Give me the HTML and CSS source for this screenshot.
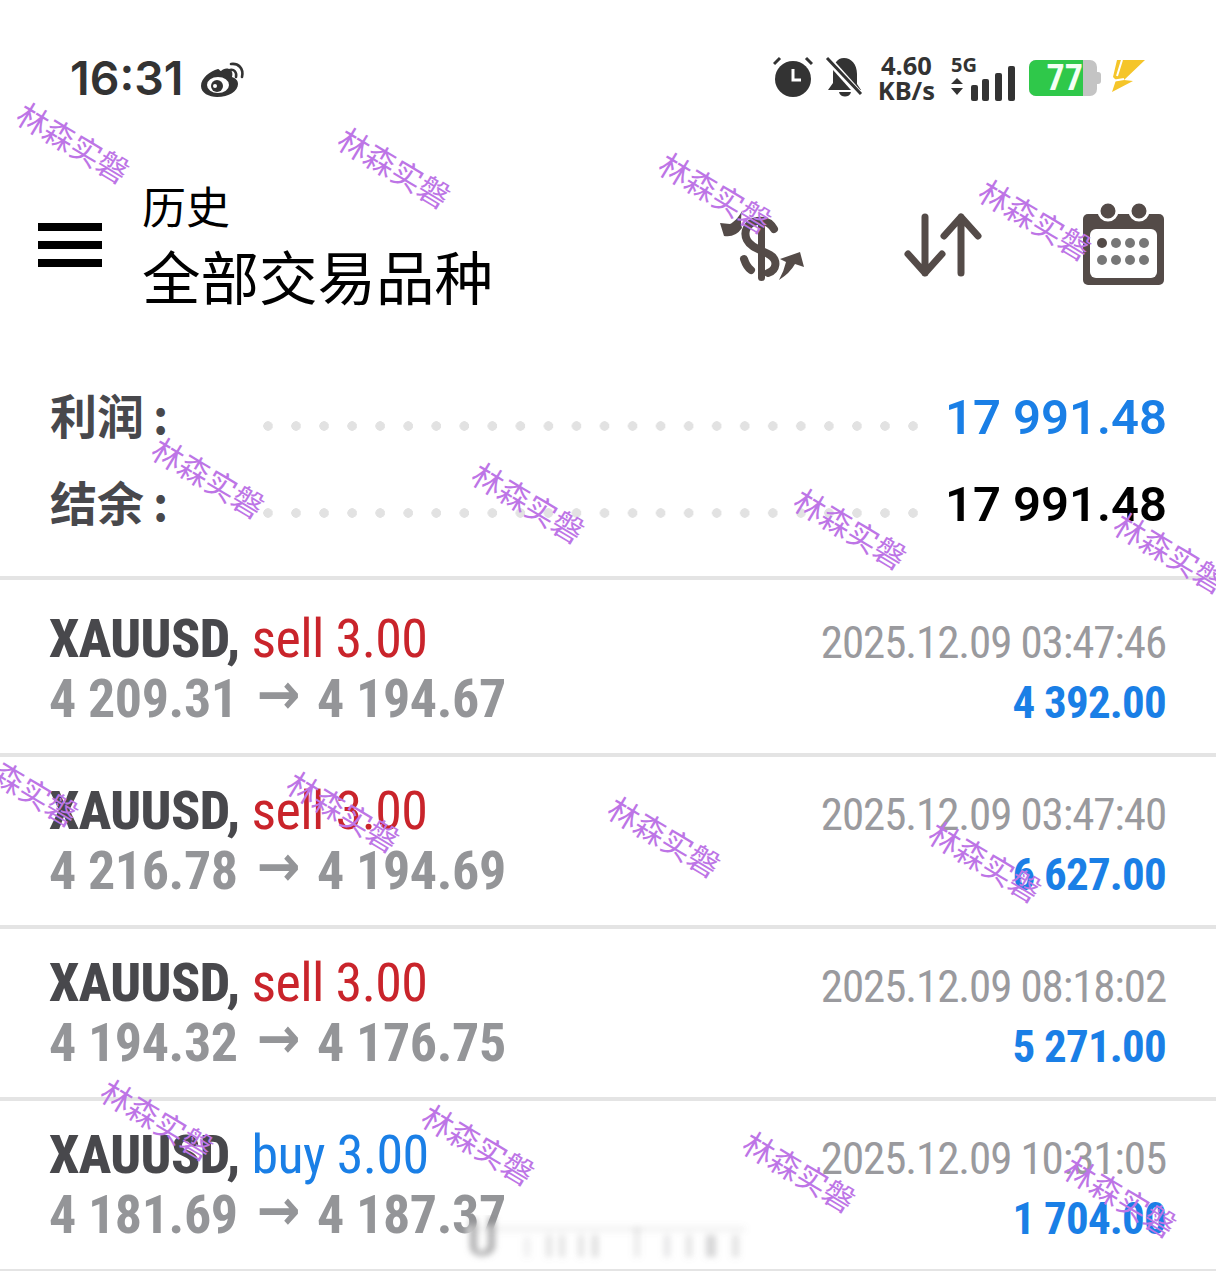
FILE: index.html
```html
<!DOCTYPE html>
<html lang="zh">
<head>
    <meta charset="UTF-8">
    <title>历史</title>
    <link rel="stylesheet" href="styles.css">
</head>
<body>
    <div class="screen">
        <div class="status-bar">
            <div class="status-left">
                <span class="clock">16:31</span>
                <svg class="weibo" width="44" height="36" viewBox="0 0 44 36">
                    <path d="M17 8C9 10 0 17 0 25c0 7 8 11 16 11 12 0 21-6 21-13 0-4-3-6-6-7 1-4 0-7-3-8-3-1-6 0-8 2-1 0-2-2-3-2z" fill="#333"/>
                    <ellipse cx="17" cy="24" rx="11" ry="8" fill="#fff"/>
                    <circle cx="16" cy="25" r="6" fill="#333"/>
                    <circle cx="14" cy="25" r="2" fill="#fff"/>
                    <path d="M29 9c4-1 7 2 6 7M30 3c7-1 13 4 11 13" fill="none" stroke="#333" stroke-width="2.6" stroke-linecap="round"/>
                </svg>
            </div>
            <div class="status-right">
                <svg class="st-alarm" width="40" height="42" viewBox="0 0 40 42">
                    <circle cx="20" cy="23" r="18" fill="#333"/>
                    <path d="M20 13v11h8" fill="none" stroke="#fff" stroke-width="3"/>
                    <path d="M1 8l6-6M39 8l-6-6" fill="none" stroke="#333" stroke-width="3"/>
                </svg>
                <svg class="st-bell" width="38" height="42" viewBox="0 0 38 42">
                    <path d="M8 18C8 8 12 2 19 2s13 6 13 16v10l4 6H3l5-7z" fill="#333"/>
                    <path d="M14 36h12c-1 6-11 6-12 0z" fill="#333"/>
                    <path d="M2 2l34 38" stroke="#fff" stroke-width="7"/>
                    <path d="M2 2l34 36" stroke="#333" stroke-width="3"/>
                </svg>
                <div class="st-speed"><span>4.60</span><span>KB/s</span></div>
                <div class="st-net">
                    <span class="st-5g">5G</span>
                    <svg width="64" height="36" viewBox="0 0 64 36">
                        <path d="M0 19l6-6 6 6zM0 23l6 7 6-7z" fill="#333"/>
                        <rect x="20" y="20" width="7" height="16" rx="2" fill="#333"/>
                        <rect x="31" y="14" width="7" height="22" rx="2" fill="#333"/>
                        <rect x="44" y="8" width="7" height="28" rx="2" fill="#333"/>
                        <rect x="57" y="1" width="7" height="35" rx="2" fill="#333"/>
                    </svg>
                </div>
                <div class="battery">
                    <div class="battery-body"><span class="battery-fill">77</span></div>
                    <div class="battery-cap"></div>
                </div>
                <svg class="st-bolt" width="36" height="34" viewBox="0 0 36 34">
                    <path d="M7 0h28L14 20l9 1L2 32l4-12-3-3z" fill="#f5c52a"/>
                    <path d="M12 0L7 16M2 21l12-2" stroke="#fff" stroke-width="2" fill="none"/>
                </svg>
            </div>
        </div>

        <div class="toolbar">
            <div class="menu-icon"><i></i><i></i><i></i></div>
            <div class="titles">
                <div class="title-small">历史</div>
                <div class="title-big">全部交易品种</div>
            </div>
            <div class="tool-icons">
                <svg class="ic-dollar" width="100" height="90" viewBox="0 0 100 90" fill="#544b48">
                    <rect x="48" y="22" width="7" height="59" rx="3.5"/>
                    <path d="M64 29C60 22 54 20 47 21 37 23 33 32 37 40 41 48 52 50 60 55 68 60 67 70 58 73M34 59C36 65 38 68 41 70" fill="none" stroke="#544b48" stroke-width="8" stroke-linecap="round"/>
                    <path d="M32 11C28 18 24 22 20 24L10 23 14 36Q25 38 32 28 30 22 32 11z"/>
                    <path d="M69 80Q74 71 76 62L70 59 90 52 94 67 85 64Q80 73 69 80z"/>
                </svg>
                <svg class="ic-sort" width="78" height="64" viewBox="0 0 78 64" fill="none" stroke="#544b48" stroke-width="7" stroke-linecap="round" stroke-linejoin="round">
                    <path d="M21 4v56M4 41l17 19 17-19"/>
                    <path d="M57 60V4M40 23L57 4l17 19"/>
                </svg>
                <svg class="ic-cal" width="82" height="82" viewBox="0 0 82 82">
                    <path d="M5 11h71a5 5 0 0 1 5 5v61a5 5 0 0 1-5 5H5a5 5 0 0 1-5-5V16a5 5 0 0 1 5-5z" fill="#544b48"/>
                    <rect x="7" y="26" width="67" height="49" rx="6" fill="#fff"/>
                    <circle cx="25" cy="8" r="9" fill="#544b48" stroke="#fff" stroke-width="3"/>
                    <circle cx="56" cy="8" r="9" fill="#544b48" stroke="#fff" stroke-width="3"/>
                    <g fill="#777">
                        <circle cx="19" cy="40" r="5" fill="#544b48"/><circle cx="33" cy="40" r="5"/><circle cx="47" cy="40" r="5"/><circle cx="61" cy="40" r="5"/>
                        <circle cx="19" cy="57" r="5"/><circle cx="33" cy="57" r="5"/><circle cx="47" cy="57" r="5"/><circle cx="61" cy="57" r="5"/>
                    </g>
                </svg>
            </div>
        </div>

        <div class="summary">
            <div class="summary-row">
                <span class="summary-label">利润<span class="colon">:</span></span>
                <span class="dots"></span>
                <span class="summary-value blue">17 991.48</span>
            </div>
            <div class="summary-row">
                <span class="summary-label">结余<span class="colon">:</span></span>
                <span class="dots"></span>
                <span class="summary-value">17 991.48</span>
            </div>
        </div>

        <div class="deals">
            <div class="deal first">
                <div class="deal-left">
                    <div class="deal-title"><b>XAUUSD,</b> <span class="red">sell 3.00</span></div>
                    <div class="deal-price">4 209.31 <span class="arrow">→</span> 4 194.67</div>
                </div>
                <div class="deal-right">
                    <div class="deal-time">2025.12.09 03:47:46</div>
                    <div class="deal-amount">4 392.00</div>
                </div>
            </div>
            <div class="deal">
                <div class="deal-left">
                    <div class="deal-title"><b>XAUUSD,</b> <span class="red">sell 3.00</span></div>
                    <div class="deal-price">4 216.78 <span class="arrow">→</span> 4 194.69</div>
                </div>
                <div class="deal-right">
                    <div class="deal-time">2025.12.09 03:47:40</div>
                    <div class="deal-amount">6 627.00</div>
                </div>
            </div>
            <div class="deal">
                <div class="deal-left">
                    <div class="deal-title"><b>XAUUSD,</b> <span class="red">sell 3.00</span></div>
                    <div class="deal-price">4 194.32 <span class="arrow">→</span> 4 176.75</div>
                </div>
                <div class="deal-right">
                    <div class="deal-time">2025.12.09 08:18:02</div>
                    <div class="deal-amount">5 271.00</div>
                </div>
            </div>
            <div class="deal">
                <div class="deal-left">
                    <div class="deal-title"><b>XAUUSD,</b> <span class="blue">buy 3.00</span></div>
                    <div class="deal-price">4 181.69 <span class="arrow">→</span> 4 187.37</div>
                </div>
                <div class="deal-right">
                    <div class="deal-time">2025.12.09 10:31:05</div>
                    <div class="deal-amount">1 704.00</div>
                </div>
            </div>
        </div>

        <!-- blurred bit over the last row -->
        <svg class="smudge" width="300" height="50" viewBox="0 0 300 50">
            <defs>
                <filter id="soft" x="-20%" y="-20%" width="140%" height="140%"><feGaussianBlur stdDeviation="3"/></filter>
            </defs>
            <rect x="8" y="10" width="284" height="34" fill="#fff" filter="url(#soft)"/>
            <g filter="url(#soft)" fill="#8a8a8c">
                <rect x="10" y="12" width="275" height="4" opacity=".15"/>
                <path d="M10 4h7v28c0 6 9 6 11-2V2h7v30c-2 12-24 12-25 0z" opacity=".7"/>
                <rect x="64" y="22" width="6" height="20" opacity=".14"/>
                <rect x="86" y="20" width="6" height="22" opacity=".25"/>
                <rect x="99" y="20" width="6" height="22" opacity=".25"/>
                <rect x="118" y="20" width="6" height="22" opacity=".25"/>
                <rect x="132" y="20" width="6" height="22" opacity=".3"/>
                <rect x="174" y="12" width="6" height="30" opacity=".18"/>
                <rect x="204" y="20" width="6" height="22" opacity=".22"/>
                <rect x="226" y="20" width="6" height="22" opacity=".25"/>
                <rect x="246" y="20" width="10" height="22" opacity=".35"/>
                <rect x="272" y="20" width="7" height="22" opacity=".25"/>
            </g>
        </svg>

        <!-- watermark stamps -->
        <span class="mark m1">林森实磐</span>
        <span class="mark m2">林森实磐</span>
        <span class="mark m3">林森实磐</span>
        <span class="mark m4">林森实磐</span>
        <span class="mark m5">林森实磐</span>
        <span class="mark m6">林森实磐</span>
        <span class="mark m7">林森实磐</span>
        <span class="mark m8">林森实磐</span>
        <span class="mark m9">林森实磐</span>
        <span class="mark m10">林森实磐</span>
        <span class="mark m11">林森实磐</span>
        <span class="mark m12">林森实磐</span>
        <span class="mark m13">林森实磐</span>
        <span class="mark m14">林森实磐</span>
        <span class="mark m15">林森实磐</span>
        <span class="mark m16">林森实磐</span>
    </div>
</body>
</html>
```

FILE: styles.css
```css
body {
    margin: 0;
    background: #fff;
    font-family: Roboto, "Noto Sans CJK SC", sans-serif;
}
.screen {
    position: relative;
    width: 1216px;
    height: 1271px;
    overflow: hidden;
}

/* status bar */
.status-bar {
    display: flex;
    justify-content: space-between;
    align-items: center;
    height: 46px;
    padding: 55px 70px 0 70px;
}
.status-left {
    display: flex;
    align-items: center;
    gap: 18px;
}
.clock {
    font-family: Inter, sans-serif;
    font-size: 46.5px;
    font-weight: 600;
    color: #333;
}
.weibo { margin-top: 2px; }
.status-right {
    display: flex;
    align-items: center;
}
.st-alarm { margin-top: -2px; }
.st-bell { margin: -2px 0.5px 0 12px; }
.st-speed {
    display: flex;
    flex-direction: column;
    margin-left: 14px;
    font-family: "Noto Sans", sans-serif;
    font-size: 25.5px;
    font-weight: 700;
    line-height: 25px;
    color: #333;
    text-align: center;
}
.st-net {
    position: relative;
    margin-left: 16px;
    width: 64px;
    height: 46px;
    display: flex;
    align-items: flex-end;
}
.st-5g {
    position: absolute;
    top: -4px;
    left: 0;
    font-family: "Noto Sans", sans-serif;
    font-size: 20px;
    font-weight: 700;
    color: #333;
}
.battery {
    display: flex;
    align-items: center;
    margin-left: 14px;
}
.battery-body {
    width: 68px;
    height: 36px;
    background: #c4c4c4;
    border-radius: 7px;
    overflow: hidden;
}
.battery-fill {
    display: block;
    width: 54px;
    height: 36px;
    background: #2fc84a;
    color: #f4fff4;
    font-size: 36px;
    font-stretch: 75%;
    font-weight: 700;
    line-height: 37px;
    text-align: right;
}
.battery-cap {
    width: 4px;
    height: 12px;
    background: #c4c4c4;
    border-radius: 0 3px 3px 0;
}
.st-bolt { margin-left: 9px; margin-top: -2px; }

/* toolbar */
.toolbar {
    display: flex;
    align-items: flex-start;
    padding: 76px 51px 0 38px;
    height: 155px;
}
.menu-icon {
    display: flex;
    flex-direction: column;
    gap: 10px;
    margin-top: 46px;
    width: 64px;
}
.menu-icon i {
    display: block;
    height: 8px;
    background: #000;
}
.titles {
    margin-left: 40px;
    font-family: "Noto Sans CJK SC", sans-serif;
    color: #000;
}
.title-small {
    font-size: 44px;
    line-height: 56px;
}
.title-big {
    font-size: 58.5px;
    line-height: 84px;
}
.tool-icons {
    display: flex;
    align-items: flex-start;
    margin-left: auto;
}
.ic-dollar { margin-top: 23px; }
.ic-sort { margin: 36px 0 0 94px; }
.ic-cal { margin: 26px 0 0 101px; }

/* profit and balance */
.summary {
    padding: 42px 49px 0 50px;
}
.summary-row {
    display: flex;
    align-items: center;
    height: 87px;
}
.summary-label {
    font-family: "Noto Sans CJK SC", sans-serif;
    font-size: 47px;
    font-weight: 700;
    color: #48484c;
    width: 118px;
    padding-bottom: 8px;
    white-space: nowrap;
}
.colon { margin-left: 9px; }
.dots {
    flex: 1;
    height: 10px;
    margin: 16px 25px 0 95px;
    background: radial-gradient(circle at 5px 5px, #e2e2e2 4.5px, transparent 5px) 0 0 / 28.05px 10px repeat-x;
}
.summary-value {
    font-size: 49px;
    font-weight: 600;
    color: #000;
    line-height: 1;
}
.summary-value.blue { color: #1a7fe6; }

/* deals */
.deals {
    margin-top: 28px;
    border-top: 4px solid #e4e4e4;
}
.deal {
    display: flex;
    justify-content: space-between;
    box-sizing: border-box;
    height: 172px;
    padding: 24px 50px 0 49px;
    border-bottom: 4px solid #e4e4e4;
}
.deal.first {
    height: 177px;
    padding-top: 29px;
}
.deal-title, .deal-price, .deal-time, .deal-amount {
    font-stretch: 75%;
    height: 60px;
    line-height: 60px;
    white-space: nowrap;
}
.deal-title {
    font-size: 54px;
    letter-spacing: -0.6px;
    color: #48484c;
}
.deal-title b { font-weight: 800; }
.deal-title span { font-weight: 400; }
.red { color: #c9242b; }
.blue { color: #1a7fe6; }
.deal-price {
    font-size: 54px;
    font-weight: 700;
    letter-spacing: -0.4px;
    color: #949598;
}
.arrow {
    margin: 0 5px 0 7px;
    font-family: "DejaVu Sans", sans-serif;
    font-size: 58px;
    font-weight: 700;
    line-height: 0;
    vertical-align: 3px;
}
.deal-right { text-align: right; padding-top: 4px; }
.deal-time {
    font-size: 45px;
    letter-spacing: -1.1px;
    color: #9a9a9e;
}
.deal-amount {
    font-size: 45px;
    font-weight: 700;
    letter-spacing: -0.8px;
    color: #1a7fe6;
}

.smudge {
    position: absolute;
    left: 460px;
    top: 1215px;
}

/* watermark */
.mark {
    position: absolute;
    width: 132px;
    margin: -16px 0 0 -62px;
    font-family: "Noto Sans CJK SC", sans-serif;
    font-size: 31px;
    line-height: 34px;
    color: #bd75e6;
    white-space: nowrap;
    transform: rotate(31deg);
}
.m1 { left: 73px; top: 143px; }
.m2 { left: 394px; top: 168px; }
.m3 { left: 715px; top: 193px; }
.m4 { left: 1035px; top: 220px; }
.m5 { left: 208px; top: 478px; }
.m6 { left: 528px; top: 503px; }
.m7 { left: 850px; top: 529px; }
.m8 { left: 1170px; top: 553px; }
.m9 { left: 22px; top: 786px; }
.m10 { left: 343px; top: 812px; }
.m11 { left: 664px; top: 837px; }
.m12 { left: 985px; top: 862px; }
.m13 { left: 157px; top: 1120px; }
.m14 { left: 478px; top: 1145px; }
.m15 { left: 799px; top: 1172px; }
.m16 { left: 1120px; top: 1197px; }
```
